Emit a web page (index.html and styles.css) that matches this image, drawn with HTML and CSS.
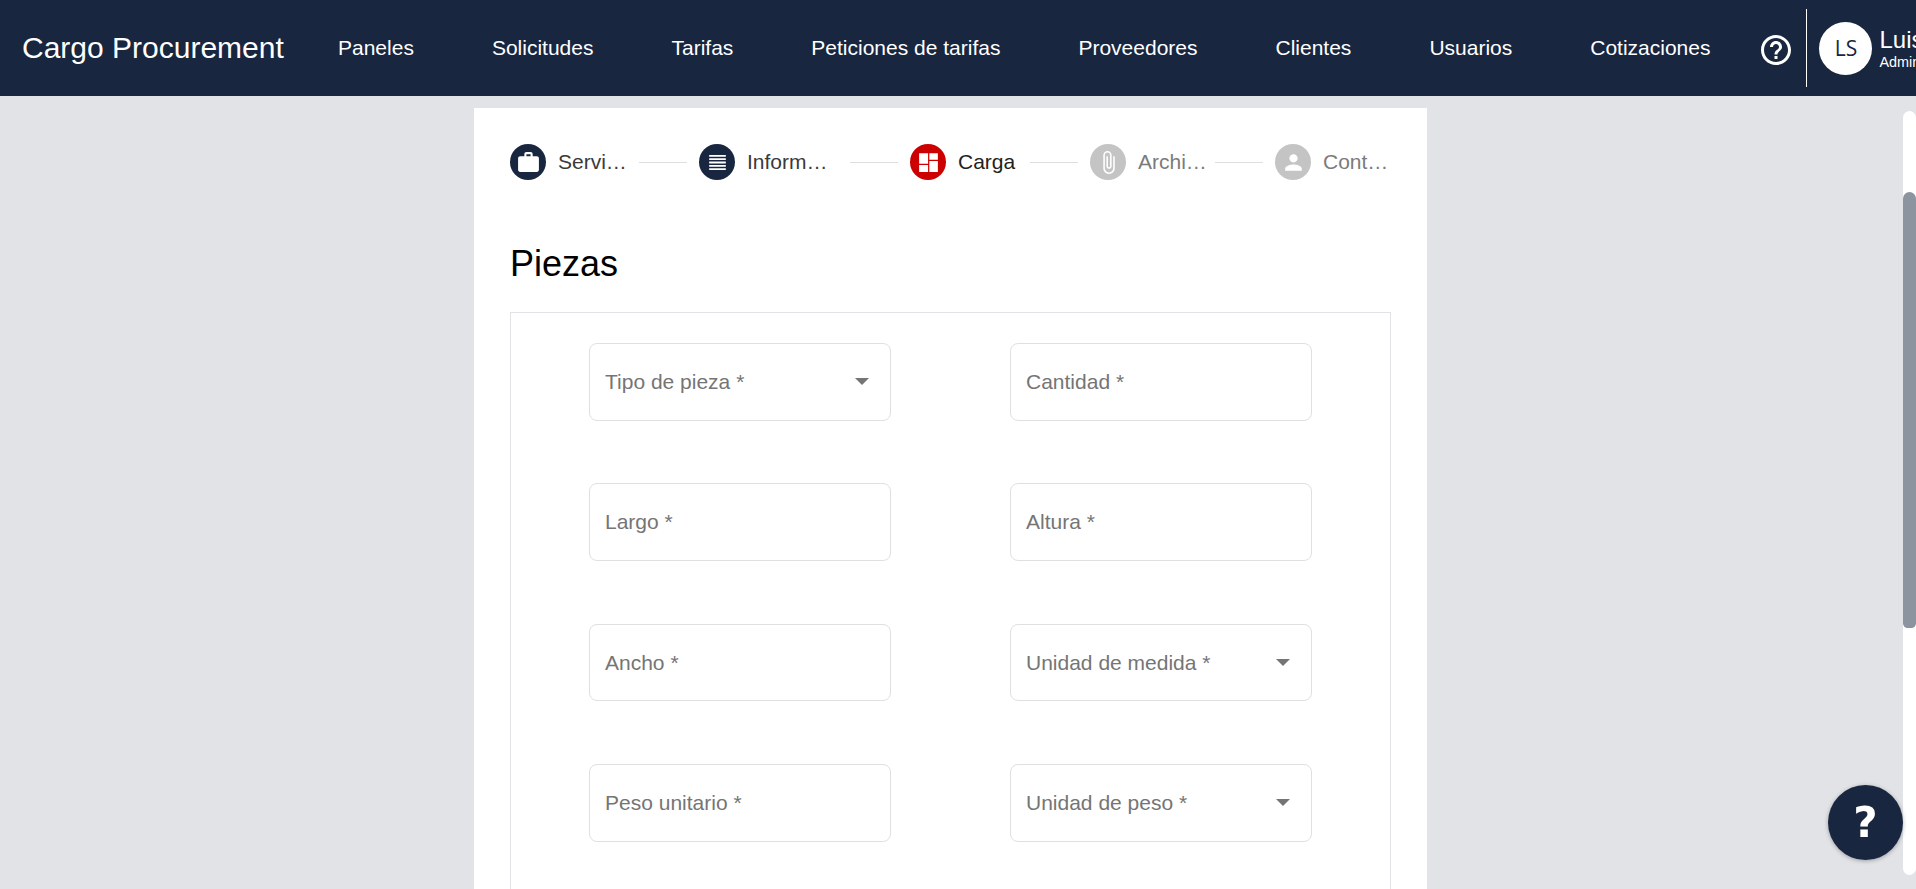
FILE: index.html
```html
<!DOCTYPE html>
<html lang="es">
<head>
<meta charset="utf-8">
<title>Cargo Procurement</title>
<link rel="stylesheet" href="styles.css">
</head>
<body>
<header class="topbar">
  <div class="brand">Cargo Procurement</div>
  <nav class="nav">
    <a class="nav-link">Paneles</a>
    <a class="nav-link">Solicitudes</a>
    <a class="nav-link">Tarifas</a>
    <a class="nav-link">Peticiones de tarifas</a>
    <a class="nav-link">Proveedores</a>
    <a class="nav-link">Clientes</a>
    <a class="nav-link">Usuarios</a>
    <a class="nav-link">Cotizaciones</a>
  </nav>
  <svg class="help-icon" viewBox="0 0 24 24"><path d="M11 18h2v-2h-2v2zm1-16C6.48 2 2 6.48 2 12s4.48 10 10 10 10-4.48 10-10S17.52 2 12 2zm0 18c-4.41 0-8-3.59-8-8s3.59-8 8-8 8 3.59 8 8-3.59 8-8 8zm0-14c-2.21 0-4 1.79-4 4h2c0-1.1.9-2 2-2s2 .9 2 2c0 2-3 1.75-3 5h2c0-2.25 3-2.5 3-5 0-2.21-1.79-4-4-4z"/></svg>
  <div class="divider"></div>
  <div class="avatar">LS</div>
  <div class="user">
    <div class="user-name">Luis Sánchez</div>
    <div class="user-role">Administrador</div>
  </div>
</header>

<div class="workspace">
  <main class="content">
    <section class="card">
      <ol class="stepper">
        <li class="step step-done step-a">
          <span class="step-icon"><svg viewBox="0 0 24 24"><path d="M20 6h-4V4c0-1.11-.89-2-2-2h-4c-1.11 0-2 .89-2 2v2H4c-1.11 0-1.99.89-1.99 2L2 19c0 1.11.89 2 2 2h16c1.11 0 2-.89 2-2V8c0-1.11-.89-2-2-2zm-6 0h-4V4h4v2z"/></svg></span>
          <span class="step-label">Servicios</span>
        </li>
        <li class="connector"></li>
        <li class="step step-done step-b">
          <span class="step-icon"><svg viewBox="0 0 24 24"><path d="M4 4.800h16v1.700H4zM4 7.950h16v1.700H4zM4 11.150h16v1.700H4zM4 14.300h16v1.700H4zM4 17.500h16v1.700H4z"/></svg></span>
          <span class="step-label">Información</span>
        </li>
        <li class="connector"></li>
        <li class="step step-active step-c">
          <span class="step-icon"><svg viewBox="0 0 24 24"><path d="M3 13.200h8.600V3H3zM3 21h8.600v-6.600H3zM12.800 21H21V10.600h-8.200zM12.800 3v6.400H21V3z"/></svg></span>
          <span class="step-label">Carga</span>
        </li>
        <li class="connector"></li>
        <li class="step step-todo step-d">
          <span class="step-icon"><svg viewBox="0 0 24 24"><path d="M16.500 6v11.500c0 2.210-1.790 4-4 4s-4-1.790-4-4V5c0-1.380 1.120-2.500 2.500-2.500s2.500 1.120 2.500 2.500v10.500c0 .55-.45 1-1 1s-1-.45-1-1V6H10v9.500c0 1.380 1.120 2.500 2.500 2.500s2.500-1.120 2.500-2.500V5c0-2.210-1.790-4-4-4S7 2.790 7 5v12.500c0 3.040 2.460 5.500 5.500 5.500s5.500-2.460 5.500-5.500V6h-1.500z"/></svg></span>
          <span class="step-label">Archivos</span>
        </li>
        <li class="connector"></li>
        <li class="step step-todo step-e">
          <span class="step-icon"><svg viewBox="0 0 24 24"><path d="M12 12c2.210 0 4-1.790 4-4s-1.790-4-4-4-4 1.790-4 4 1.790 4 4 4zm0 2c-2.670 0-8 1.340-8 4v2h16v-2c0-2.660-5.330-4-8-4z"/></svg></span>
          <span class="step-label">Contacto</span>
        </li>
      </ol>

      <h1 class="title">Piezas</h1>

      <div class="panel">
        <div class="form-grid">
          <div class="field"><span class="field-label">Tipo de pieza *</span><span class="caret"></span></div>
          <div class="field"><span class="field-label">Cantidad *</span></div>
          <div class="field"><span class="field-label">Largo *</span></div>
          <div class="field"><span class="field-label">Altura *</span></div>
          <div class="field"><span class="field-label">Ancho *</span></div>
          <div class="field"><span class="field-label">Unidad de medida *</span><span class="caret"></span></div>
          <div class="field"><span class="field-label">Peso unitario *</span></div>
          <div class="field"><span class="field-label">Unidad de peso *</span><span class="caret"></span></div>
        </div>
      </div>
    </section>
  </main>
  <div class="scrolltrack"><div class="scrollthumb"></div></div>
</div>

<button class="help-fab" type="button">?</button>
</body>
</html>
```

FILE: styles.css
```css
* {
  box-sizing: border-box;
}

html,
body {
  margin: 0;
  height: 100%;
  overflow: hidden;
}

body {
  display: flex;
  flex-direction: column;
  background: #e1e3e7;
  font-family: "Liberation Sans", Arial, sans-serif;
}

.topbar {
  flex: 0 0 96px;
  display: flex;
  align-items: center;
  padding-left: 22px;
  background: #18263f;
  color: #fff;
  overflow: hidden;
}

.brand {
  flex: none;
  width: 316px;
  font-size: 30px;
  white-space: nowrap;
}

.nav {
  flex: none;
  display: flex;
  gap: 78px;
  margin-right: 48px;
}

.nav-link {
  font-size: 21px;
  white-space: nowrap;
}

.help-icon {
  flex: none;
  width: 36px;
  height: 36px;
  margin-top: 4px;
  fill: #fff;
}

.divider {
  flex: none;
  width: 1px;
  height: 78px;
  margin: 0 12px;
  background: #fff;
}

.avatar {
  flex: none;
  display: flex;
  align-items: center;
  justify-content: center;
  width: 53px;
  height: 53px;
  border-radius: 50%;
  background: #fff;
  color: #18263f;
  font-family: "Open Sans", sans-serif;
  font-size: 21px;
}

.user {
  flex: none;
  margin-left: 7px;
  white-space: nowrap;
}

.user-name {
  font-size: 24px;
  line-height: 28px;
}

.user-role {
  font-size: 14.400px;
  line-height: 16px;
}

.workspace {
  flex: 1;
  min-height: 0;
  display: flex;
}

.content {
  flex: 1;
  min-width: 0;
  display: flex;
  justify-content: center;
  padding: 12px 2px 0 0;
  overflow: hidden;
}

.card {
  flex: none;
  width: 953px;
  height: 900px;
  padding: 36px 36px 0;
  background: #fff;
}

.stepper {
  display: flex;
  align-items: center;
  margin: 0;
  padding: 0;
  list-style: none;
}

.step {
  flex: none;
  display: flex;
  align-items: center;
  gap: 12px;
}

.step-icon {
  flex: none;
  display: flex;
  align-items: center;
  justify-content: center;
  width: 36px;
  height: 36px;
  border-radius: 50%;
  color: #fff;
}

.step-icon svg {
  width: 25px;
  height: 25px;
  fill: currentColor;
}

.step-done .step-icon {
  background: #18263f;
}

.step-active .step-icon {
  background: #cc0000;
}

.step-todo .step-icon {
  background: #c4c4c4;
}

.step-label {
  overflow: hidden;
  font-size: 21px;
  line-height: 24px;
  white-space: nowrap;
  text-overflow: ellipsis;
}

.step-done .step-label {
  color: #3a3a3a;
}

.step-active .step-label {
  color: #222;
}

.step-todo .step-label {
  color: #7b7b7b;
}

.step-a .step-label { width: 69px; }
.step-b .step-label { width: 81px; }
.step-c .step-label { width: 60px; }
.step-d .step-label { width: 69px; }
.step-e .step-label { width: 68px; }

.connector {
  flex: none;
  width: 48px;
  height: 1px;
  margin: 0 12px;
  background: #dedede;
}

.step-b + .connector {
  margin-left: 22px;
}

.step-d + .connector {
  margin-left: 8px;
}

.title {
  margin: 63px 0 0;
  height: 69px;
  color: #000;
  font-size: 36px;
  font-weight: 400;
  line-height: 42px;
}

.panel {
  height: 700px;
  padding-top: 30px;
  border: 1px solid #e1e3e7;
}

.form-grid {
  display: grid;
  grid-template-columns: 302px 302px;
  grid-auto-rows: 77.500px;
  justify-content: center;
  column-gap: 119px;
  row-gap: 62.900px;
}

.field {
  display: flex;
  align-items: center;
  justify-content: space-between;
  padding: 0 21px 0 15px;
  border: 1px solid #e0e0e0;
  border-radius: 8px;
}

.field-label {
  color: #757575;
  font-size: 21px;
}

.caret {
  flex: none;
  width: 0;
  height: 0;
  border-top: 7px solid #757575;
  border-left: 7px solid transparent;
  border-right: 7px solid transparent;
}

.scrolltrack {
  flex: none;
  width: 13px;
  margin: 15px 0 14px;
  padding-top: 81px;
  border-radius: 7px;
  background: #fff;
}

.scrollthumb {
  height: 436px;
  border-radius: 7px 7px 5px 5px;
  background: #8c94a0;
}

.help-fab {
  position: fixed;
  left: 1828px;
  top: 785px;
  width: 75px;
  height: 75px;
  padding: 0;
  border: 0;
  border-radius: 50%;
  background: #18263f;
  box-shadow: 0 1px 4px rgba(0, 0, 0, 0.3);
  color: #fff;
  font-family: "DejaVu Sans", sans-serif;
  font-size: 42px;
  font-weight: 700;
  line-height: 75px;
}
```
